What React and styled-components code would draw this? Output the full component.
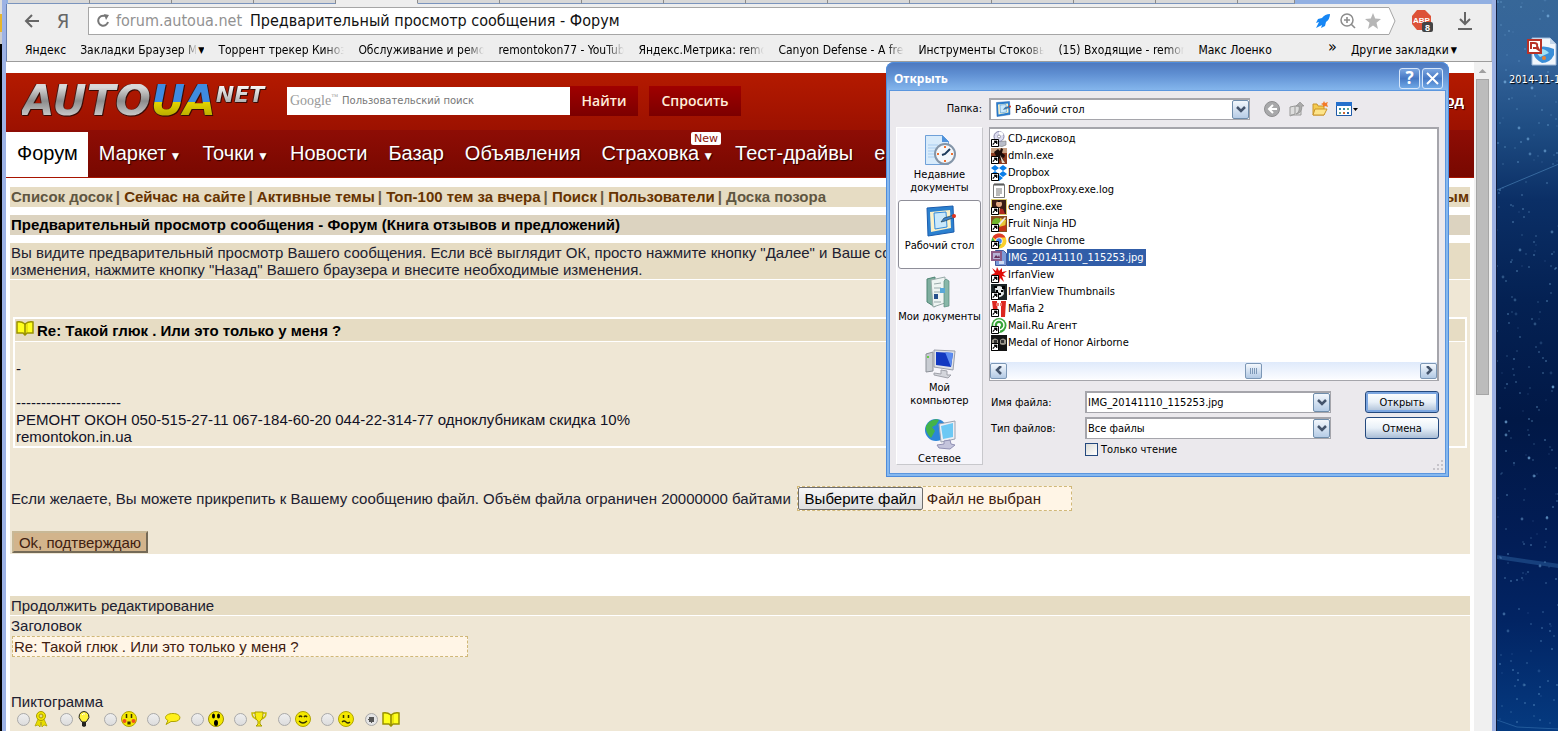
import { useRef, useState } from "react";
import styled, { createGlobalStyle, css } from "styled-components";

const tahoma = `"DejaVu Sans Condensed", "Noto Sans", sans-serif`;
const arial = `"Liberation Sans", Arial, sans-serif`;

const GlobalStyle = createGlobalStyle`
  * { box-sizing: border-box; }
  body { margin: 0; background: #062a66; font-family: ${arial}; }
  button, input, select { font: inherit; color: inherit; }
  ul { list-style: none; margin: 0; padding: 0; }
  a { color: inherit; text-decoration: none; }
  svg { display: block; flex: none; }
`;

/* ── Desktop and browser frame ── */
const Screen = styled.div`
  position: relative;
  display: flex;
  height: 100vh;
  overflow: hidden;
`;

const LeftStrip = styled.div`
  flex: none;
  width: 2px;
  background: linear-gradient(#ddd 0 14px, #e8b62c 14px 32px, #ccc 32px 44px, #000 44px);
`;

const BrowserWindow = styled.div`
  flex: 1;
  min-width: 0;
  display: flex;
  flex-direction: column;
  background: #eeeeee;
  border: solid #9db2e4;
  border-width: 0 4px;
  box-shadow: inset 1px 0 #6780b4, inset -1px 0 #c8c8c8;
`;

const Desktop = styled.aside`
  position: relative;
  flex: none;
  width: 62px;
  overflow: hidden;
  border-left: 1px solid #101c3c;
  background: linear-gradient(#376798 0, #34649a 60px, #1e4c82 130px, #0b2f66 200px, #042153 300px, #011846 420px, #021d56 540px, #022463 620px, #053a80 731px);
`;

const Specks = styled.svg`
  position: absolute;
  inset: 0;
`;

const DesktopIcon = styled.div`
  position: relative;
  padding: 36px 0 0 12px;
  font: 11px/14px ${tahoma};
  color: #fff;
  text-shadow: 1px 1px 1px #000;
  white-space: nowrap;

  svg { margin: 0 0 5px 18px; }
`;

/* ── Browser chrome ── */
const TabStrip = styled.div`
  display: flex;
  flex: none;
  height: 4px;
  padding: 0 197px 0 2px;
  background: #92b0e2;
`;

const Tab = styled.div`
  flex: 0 0 82px;
  background: ${(p) => (p.$active ? "#eeeeee" : "#d8d8d8")};
  border-right: 1px solid #8b8b8b;
  border-bottom: 1px solid ${(p) => (p.$active ? "#eeeeee" : "#7a94bd")};

  &:last-child { flex: 1; }
`;

const Toolbar = styled.div`
  display: flex;
  align-items: center;
  flex: none;
  height: 34px;
  padding: 0 19px 0 18px;
  font: 16px/28px ${tahoma};
`;

const IconButton = styled.button`
  display: flex;
  align-items: center;
  justify-content: center;
  padding: 0;
  border: 0;
  background: none;
  color: #666;
  font-size: 20px;
  width: ${(p) => p.$w || 16}px;
  height: 28px;
  margin-left: ${(p) => p.$gap || 0}px;
`;

const Omnibox = styled.div`
  display: flex;
  align-items: center;
  flex: 1;
  min-width: 0;
  height: 28px;
  margin-left: 17px;
  padding: 0 6px;
  border: 1px solid #a6a6a6;
  border-right: 0;
  background: #fff;
  white-space: nowrap;
`;

const Host = styled.span`
  margin-left: 5px;
  color: #929292;
`;

const PageTitle = styled.span`
  flex: 1;
  margin-left: 8px;
  color: #111;
`;

const Bookmarks = styled.nav`
  display: flex;
  align-items: center;
  flex: none;
  gap: 14px;
  height: 24px;
  padding: 0 35px 0 19px;
  border-bottom: 1px solid #9c9c9c;
  font: 12px/22px ${tahoma};
  color: #000;
  white-space: nowrap;
`;

const Bookmark = styled.a`
  flex: none;
  display: flex;
  align-items: center;
  max-width: 126px;
  overflow: hidden;
  ${(p) => p.$wide && css`
    width: 126px;
    mask-image: linear-gradient(to right, #000 108px, transparent 126px);
  `}
`;

const MoreBookmarks = styled.button`
  margin-left: auto;
  padding: 0 0 6px;
  border: 0;
  background: none;
  font-size: 16px;
`;

const FolderName = styled.span`
  width: 116px;
  overflow: hidden;
  mask-image: linear-gradient(to right, #000 104px, transparent 118px);
`;

const Caret = styled.span`
  font-size: 9px;
  margin-left: 2px;
`;

const Viewport = styled.div`
  flex: 1;
  min-height: 0;
  display: flex;
`;

const Page = styled.main`
  flex: 1;
  min-width: 0;
  overflow: hidden;
  padding-top: 11px;
  background: #fff;
  font-size: 15px;
  line-height: 17px;
  color: #202030;
`;

const Scrollbar = styled.div`
  flex: none;
  width: 18px;
  padding: 7px 3px 0 2px;
  background: #f0f0f0;
`;

const ScrollArrow = styled.div`
  margin: 0 auto 6px;
  width: 8px;
  height: 4px;
  background: #a0a0a0;
  clip-path: polygon(50% 0, 100% 100%, 0 100%);
`;

const ScrollThumb = styled.div`
  height: 316px;
  border: 1px solid #a6a6a6;
  background: #bcbcbc;
`;

/* ── Site header ── */
const SiteHeader = styled.header`
  display: flex;
  align-items: center;
  height: 57px;
  padding: 0 10px 2px 16px;
  background: linear-gradient(#b41a00, #9c1100);
  color: #fff;
`;

const Logo = styled.a`
  display: flex;
  align-items: flex-start;
  width: 265px;
  font: italic bold 42px/34px "DejaVu Sans", sans-serif;
  filter: drop-shadow(1px 1px 0 #3a0a04) drop-shadow(-1px 0 0 #4a1a14);

  span {
    color: transparent;
    background: linear-gradient(#d8d8d8 10%, #8c8c8c 50%, #c4c4c4 90%);
    background-clip: text;
  }
  span + span { background-image: linear-gradient(#3f8be0 54%, #e3d400 54%, #b4a600); }
  span + span + span {
    padding-right: 4px;
    font-size: 22px;
    line-height: 22px;
    background-image: linear-gradient(#fff, #a0a0a0);
  }
`;

const SearchForm = styled.form`
  display: flex;
  align-items: center;
  height: 30px;
`;

const SearchField = styled.label`
  display: flex;
  align-items: center;
  gap: 4px;
  width: 283px;
  height: 28px;
  padding: 0 3px;
  background: #fff;
  color: #999;
  font: 14px "Liberation Serif", serif;

  sup { font-size: 7px; }

  input {
    flex: 1;
    min-width: 0;
    padding: 0;
    border: 0;
    outline: 0;
    background: none;
    font: 10px "DejaVu Sans", sans-serif;
  }
  input::placeholder { color: #777; }
`;

const RedButton = styled.button`
  height: 30px;
  width: ${(p) => p.$w}px;
  margin-left: ${(p) => p.$gap || 0}px;
  padding: 0;
  border: 0;
  background: linear-gradient(#a00000, #7c0000);
  color: #ffeeda;
  font: 600 14px "Open Sans", "Noto Sans", sans-serif;
`;

const LoginLink = styled.a`
  margin-left: auto;
  font-weight: bold;
  text-decoration: underline;
  text-shadow: 1px 1px 1px #300;
`;

const MainNav = styled.nav`
  display: flex;
  height: 48px;
  padding-top: 2px;
  border-bottom: 1px solid #a81400;
  background: linear-gradient(#8e0d05, #780800);
  white-space: nowrap;
`;

const NavItem = styled.a`
  position: relative;
  padding: 0 10px 0 11px;
  font-size: 20px;
  line-height: 43px;
  color: ${(p) => (p.$active ? "#000" : "#fff")};
  background: ${(p) => (p.$active ? "#fff" : "none")};
  text-shadow: ${(p) => (p.$active ? "none" : "1px 1px 1px #200")};

  small { font-size: 12px; margin-left: 3px; }
`;

const NewBadge = styled.span`
  position: absolute;
  top: 0;
  right: 3px;
  width: 30px;
  border-radius: 2px;
  background: #fff;
  color: #8c1408;
  font: 11px/13px "DejaVu Sans", sans-serif;
  text-align: center;
  text-shadow: none;
`;

/* ── Forum page ── */
const Content = styled.div`
  padding: 9px 4px 0;
`;

const LinkBar = styled.nav`
  display: flex;
  gap: 3px;
  height: 20px;
  padding: 0 1px;
  margin-bottom: 8px;
  background: #e6dcc3;
  color: #6b5b42;
  font-weight: bold;
  line-height: 20px;
  white-space: nowrap;

  a { color: #663300; }
  a.muted { color: #5f5641; }
  a:last-child { margin-left: auto; }
`;

const TitleBar = styled.h1`
  height: 20px;
  margin: 0 0 8px;
  padding: 0 1px;
  background: #dcd3c0;
  color: #000;
  font-size: 15px;
  line-height: 20px;
`;

const Notice = styled.p`
  margin: 0;
  padding: 1px;
  background: #e6dcc3;
  border-bottom: 1px solid #fff;
`;

const Panel = styled.section`
  padding: ${(p) => p.$pad || "1px"};
  background: #efe7d5;
`;

const Post = styled.article`
  margin: 0 2px 38px;
  border: 2px solid #fff;
  color: #111125;
`;

const PostTitle = styled.h2`
  display: flex;
  align-items: center;
  gap: 3px;
  height: 23px;
  margin: 0;
  padding: 0 1px;
  border-bottom: 1px solid #fff;
  background: #e6dcc3;
  color: #000;
  font-size: 15px;

  svg { align-self: flex-start; margin-top: 1px; }
`;

const PostBody = styled.p`
  margin: 0;
  padding: 1px 1px 1px;
  white-space: pre-line;
`;

const AttachRow = styled.div`
  display: flex;
  align-items: center;
  gap: 6px;
  margin-bottom: 20px;
  white-space: nowrap;
`;

const FileBox = styled.div`
  display: flex;
  align-items: center;
  gap: 4px;
  width: 275px;
  height: 25px;
  border: 1px dashed #d0b878;
  background: #fff5e6;
  color: #402010;

  input { display: none; }

  button {
    height: 23px;
    width: 125px;
    padding: 0;
    border: 1px solid #6e6e6e;
    border-radius: 2px;
    background: linear-gradient(#f6f6f6, #dedede);
    color: #000;
  }
`;

const OkButton = styled.button`
  display: block;
  width: 136px;
  height: 22px;
  margin-left: 1px;
  padding: 0;
  border: 2px outset #c8b896;
  background: #d2b48c;
  color: #402010;
  line-height: 17px;
`;

const SectionBar = styled.h2`
  height: 20px;
  margin: 42px 0 0;
  padding: 1px;
  border-bottom: 1px solid #fff;
  background: #e6dcc3;
  font-size: 15px;
  font-weight: normal;
`;

const TitleInput = styled.input`
  display: block;
  width: 456px;
  height: 21px;
  margin: 2px 0 36px 1px;
  padding: 0 1px;
  border: 1px dashed #d0b878;
  background: #fff5e6;
  color: #402010;
`;

const Fieldset = styled.fieldset`
  margin: 0;
  padding: 0 0 24px;
  border: 0;

  legend { padding: 0; }
  > div {
    display: grid;
    grid-template-columns: repeat(9, 1fr);
    width: 397px;
    padding-left: 6px;
  }
`;

const IconChoice = styled.label`
  display: flex;
  align-items: center;
  gap: 4px;
  height: 18px;

  input {
    appearance: none;
    flex: none;
    width: 13px;
    height: 13px;
    margin: 0;
    border: 1px solid #a9a9a9;
    border-radius: 50%;
    background: linear-gradient(#efefef, #dcdcdc);
  }
  input:checked {
    background: radial-gradient(circle, #555 0 3px, #e4e4e4 3px);
  }
`;

/* ── File dialog ── */
const Dialog = styled.div`
  position: absolute;
  top: 62px;
  right: 109px;
  width: 563px;
  padding: 0 4px 4px;
  border-radius: 8px 8px 0 0;
  background: linear-gradient(#4d77bd 0, #5f8fd2 12px, #86b8ee 29px);
  box-shadow: inset 0 0 0 1px #4e8cdc;
  font: 11px/13px ${tahoma};
  color: #000;
`;

const DialogTitle = styled.div`
  display: flex;
  align-items: center;
  gap: 2px;
  height: 29px;
  padding: 3px 2px 0 4px;
  color: #fff;
  font: bold 12px "Noto Sans", sans-serif;

  span { flex: 1; }
`;

const CaptionButton = styled.button`
  display: flex;
  align-items: center;
  justify-content: center;
  width: 21px;
  height: 21px;
  padding: 0;
  border: 1px solid #d6e6fa;
  border-radius: 3px;
  background: linear-gradient(#7ba6e0, #4678c4 50%, #6fa8e6);
  font: bold 17px "Noto Sans", sans-serif;
  line-height: 18px;
`;

const DialogBody = styled.div`
  display: grid;
  grid-template-columns: 87px 1fr;
  column-gap: 6px;
  padding: 7px 6px 8px;
  background: #ebe9ed;
  box-shadow: 0 0 0 1px #5b96de;
`;

const FolderLabel = styled.label`
  padding-right: 1px;
  line-height: 22px;
  text-align: right;
`;

const FolderRow = styled.div`
  display: flex;
  align-items: center;
  gap: 8px;
  margin-bottom: 7px;
`;

const ComboBox = styled.div`
  position: relative;
  display: flex;
  width: ${(p) => p.$w}px;
  height: 22px;
  border: 2px solid #a5a5ab;
  border-width: 2px 1px 1px 2px;
  background: #fff;

  input, select {
    appearance: none;
    width: 100%;
    min-width: 0;
    padding: 0 20px 0 ${(p) => (p.$icon ? 24 : 1)}px;
    border: 0;
    outline: 0;
    background: none;
  }
  > svg { position: absolute; left: 4px; top: 1px; }
`;

const DropArrow = styled.span`
  position: absolute;
  top: 0;
  right: 0;
  display: flex;
  align-items: center;
  justify-content: center;
  width: 17px;
  height: 19px;
  border: 1px solid #6f8dab;
  border-radius: 2px;
  background: linear-gradient(#f2f7fc, #b6cce6);
  pointer-events: none;
`;

const ToolIcon = styled.button`
  display: flex;
  padding: 0;
  border: 0;
  background: none;
  &:first-of-type { margin-left: 6px; }
`;

const Places = styled.ul`
  height: 338px;
  overflow: hidden;
  border: 1px solid #fff;
  border-right-color: #c8c8cc;
  border-bottom-color: #c8c8cc;
  background: #f6f5fa;
`;

const Place = styled.li`
  height: 69px;
  margin: 1px 1px 2px;
  border: 1px solid ${(p) => (p.$active ? "#8e8e98" : "transparent")};
  border-radius: 3px;
  background: ${(p) => (p.$active ? "#fff" : "none")};

  button {
    display: flex;
    flex-direction: column;
    align-items: center;
    gap: 2px;
    width: 100%;
    padding: 4px 0 0;
    border: 0;
    background: none;
    white-space: pre;
  }
`;

const FilePane = styled.div`
  display: flex;
  flex-direction: column;
`;

const FileListBox = styled.div`
  height: 254px;
  display: flex;
  flex-direction: column;
  justify-content: space-between;
  margin-bottom: 10px;
  padding: 1px 0;
  border: 2px solid #a5a5ab;
  border-width: 2px 2px 1px 1px;
  background: #fff;
`;

const FileRow = styled.li`
  display: flex;
  align-items: center;
  height: 17px;
  padding-left: 1px;

  span {
    padding: 0 2px 0 1px;
    line-height: 17px;
    ${(p) => p.$selected && css`
      background: #315da8;
      color: #fff;
    `}
  }
`;

const HScroll = styled.div`
  display: flex;
  align-items: center;
  justify-content: space-between;
  height: 17px;
  background: linear-gradient(#dfeafb, #fbfcff);
`;

const HScrollPart = styled.div`
  display: flex;
  align-items: center;
  justify-content: center;
  width: 17px;
  height: 16px;
  border: 1px solid #7c97b6;
  border-radius: 2px;
  background: linear-gradient(#f4f8fd, #b2c9e4);

  /* uneven free space on each side of the thumb */
  &:nth-child(2) { margin-left: 80px; }
`;

const FormGrid = styled.div`
  display: grid;
  grid-template-columns: 94px 246px 1fr;
  row-gap: 4px;
  align-items: center;
  padding-left: 2px;
`;

const DialogButton = styled.button`
  justify-self: end;
  width: 74px;
  height: 22px;
  padding: 0;
  border: 1px solid #24497e;
  border-radius: 3px;
  background: linear-gradient(#fff, #e8f0f8 50%, #a9bdd6);
  box-shadow: ${(p) => (p.$primary ? "inset 0 0 0 2px #7ca6e0" : "none")};
`;

const CheckLabel = styled.label`
  grid-column: 2;
  display: flex;
  align-items: center;
  gap: 3px;

  input {
    appearance: none;
    width: 13px;
    height: 13px;
    margin: 0;
    border: 1px solid #24497e;
    background: linear-gradient(135deg, #dcdcd7, #fff);
  }
`;

const Grip = styled.svg`
  position: absolute;
  right: 5px;
  bottom: 5px;
`;

/* ── Icons ── */
const Shortcut = () => (
  <g>
    <path d="M0.500 8.500h7v7h-7z" fill="#fff" stroke="#000" />
    <path d="M2 14c0-2 1-2.500 2.500-2.500M3 10h3v3z" fill="#000" stroke="#000" strokeWidth=".7" />
  </g>
);

const fileArt = {
  cd: (
    <>
      <path d="M5 11l10-1v4l-4 1.500-6-1z" fill="#b8bcc8" stroke="#777" strokeWidth=".6" />
      <circle cx="8" cy="5.500" r="5" fill="#dcdcf0" stroke="#8888a8" />
      <path d="M8 .6a5 5 0 0 1 4.500 3L8 5.500z" fill="#fff" />
      <circle cx="8" cy="5.500" r="1.500" fill="#fff" stroke="#99a" />
    </>
  ),
  horse: (
    <>
      <path d="M0 0h16v16H0z" fill="#8b3b20" />
      <path d="M0 0h16v5H0z" fill="#c9a080" />
      <path d="M3 4l4-3 2 2 1-3 2 1-1 4 3 2-1 3-2-1 2 4h-3l-2-3-3 3-2-1 2-4z" fill="#1c0c08" />
      <path d="M9 7l5 8h-3z" fill="#eadcc8" />
    </>
  ),
  dropbox: (
    <path d="M4 0l4 3-4 3-4-3zm8 0l4 3-4 3-4-3zM4 6l4 3-4 3-4-3zm8 0l4 3-4 3-4-3zM8 10l4 3-4 3-4-3z" fill="#0a7de8" />
  ),
  log: (
    <>
      <path d="M2.500 2.500h11v13h-11z" fill="#fff" stroke="#777" />
      <path d="M4 1v3m2-3v3m2-3v3m2-3v3m2-3v3" stroke="#444" />
      <path d="M5 7h6M5 9h6M5 11h6M5 13h4" stroke="#777" />
    </>
  ),
  engine: (
    <>
      <path d="M.5.5h15v15H.5z" fill="#3a1c14" stroke="#d9c96a" />
      <circle cx="8" cy="5" r="3" fill="#e2ab84" />
      <path d="M5 4q3-5 6 0l-1-1H6z" fill="#111" />
      <path d="M4 15q1-7 8-5l2 5z" fill="#b02a20" />
      <path d="M7 9h2l-1 6z" fill="#ead9b0" />
    </>
  ),
  ninja: (
    <>
      <path d="M0 0h16v16H0z" fill="#8a4f20" />
      <circle cx="6" cy="7" r="5" fill="#6fb52c" />
      <path d="M9 2l6 2-1 8-5 2z" fill="#e9c636" />
      <path d="M2 13L14 1l1 1L4 15z" fill="#eee" />
      <path d="M8 11l7-2v6H8z" fill="#c33418" />
    </>
  ),
  chrome: (
    <>
      <circle cx="8" cy="8" r="7.500" fill="#fbcf2b" />
      <path d="M8 8L1.500 4.200A7.500 7.500 0 0 1 14.500 4.500H8z" fill="#df3b2c" />
      <path d="M8 8L4.800 10 1.500 4.200A7.500 7.500 0 0 0 7.500 15.500l3-5z" fill="#3fa64b" />
      <circle cx="8" cy="8" r="3.600" fill="#fff" />
      <circle cx="8" cy="8" r="2.800" fill="#4385ee" />
    </>
  ),
  image: (
    <>
      <path d="M4.500.5h8l3 3v12h-11z" fill="#7b9ad8" stroke="#42599c" />
      <path d="M0 1h11v10H0z" fill="#8c5a86" />
      <path d="M2 3h7v6H2z" fill="#b7b3d6" />
      <path d="M3 8l2-3 2 2 1-2 1 3z" fill="#66305c" />
      <path d="M8 11h5v3H8z" fill="#d0dcf2" />
    </>
  ),
  splat: (
    <path d="M1 1l4 3 1-4 2 4 3-3v4l5-1-4 3 3 3-4-1 2 6-4-4-1 5-2-5-4 2 2-4-4-1 4-2z" fill="#e00c08" />
  ),
  panda: (
    <>
      <path d="M0 0h16v16H0z" fill="#1c2426" />
      <path d="M4 4q4-4 8 0l1 6q-4 6-8 1z" fill="#e6eaea" />
      <path d="M5 6h2v2H5zm5 0h2v2h-2zM7 9h3v2H7zM3 2h3v2H3zm8 0h3v3h-3z" fill="#000" />
    </>
  ),
  mafia: (
    <>
      <path d="M1 0h5l1 16H3z" fill="#dc2620" />
      <path d="M10 0h5l-1 16h-4z" fill="#dc2620" />
      <path d="M5 2h3v3H5zm4 0h2v3H9z" fill="#ef7a70" />
    </>
  ),
  agent: (
    <>
      <circle cx="8" cy="7.500" r="7.500" fill="#38a538" />
      <circle cx="8" cy="7" r="5" fill="none" stroke="#fff" strokeWidth="1.500" />
      <circle cx="8" cy="7" r="2" fill="#fff" />
      <path d="M7 8h2v6H7z" fill="#fff" />
    </>
  ),
  medal: (
    <>
      <path d="M0 0h16v16H0z" fill="#141414" />
      <path d="M1 5q3-3 6 0v4q-3 2-6 0zm8 0q3-3 6 0v4q-3 2-6 0z" fill="#98948a" />
      <path d="M3 5h3v3H3zm7 0h3v3h-3z" fill="#333" />
    </>
  ),
};

const FileIcon = ({ name, shortcut }) => (
  <svg width="16" height="16" viewBox="0 0 16 16">
    {fileArt[name]}
    {shortcut && <Shortcut />}
  </svg>
);

const placeArt = {
  recent: (
    <>
      <path d="M1.500 1.500h17l6 6v23h-23z" fill="#d8ebfb" stroke="#6fa0d8" />
      <path d="M18 1l7 7h-7z" fill="#4f92dc" />
      <path d="M4 11h10M4 14h8M4 17h7M4 20h7M4 23h8" stroke="#a9cdf0" />
      <circle cx="21" cy="20" r="10" fill="#f2f7fc" stroke="#8495a8" strokeWidth="2" />
      <path d="M21 12v2m0 12v2m-8-8h2m12 0h2" stroke="#ee7030" strokeWidth="2" />
      <path d="M26 15l-5 5-3 1" fill="none" stroke="#1d3c5c" strokeWidth="2" />
    </>
  ),
  desktop: (
    <>
      <path d="M3 3l26-2 1 26-26 4z" fill="#2b80cf" stroke="#1a5cae" />
      <path d="M6 7l20-2 1 18-20 4z" fill="#fbf1c8" />
      <path d="M10 8l12-1 1 15-12 2z" fill="#c9e8fb" stroke="#338bdc" />
      <path d="M17 17l3-4 10-3 1 2-10 4z" fill="#3b80c8" stroke="#245" strokeWidth=".7" />
      <circle cx="30" cy="11" r="2" fill="#e03420" />
    </>
  ),
  docs: (
    <>
      <path d="M3 3l8-2v30l-8-5z" fill="#7fae9f" stroke="#4f8574" />
      <path d="M7 4l14-3v26L9 31z" fill="#eef4f2" stroke="#98aaa8" />
      <path d="M22 3l3 2v25l-5 1V5z" fill="#88b7a8" stroke="#588a7c" strokeWidth=".7" />
      <path d="M10 8l7-1m-7 5h7m-7 4h7m-7 10h7" stroke="#9aa" />
      <path d="M10 18h4v5h-4z" fill="#26508c" />
      <path d="M16 12h5v5h-5z" fill="#58a8d8" />
    </>
  ),
  computer: (
    <>
      <path d="M2 7l7-2v19l-7 1z" fill="#c8ccd2" stroke="#8c9098" />
      <path d="M3 9h2v2H3z" fill="#6c4" />
      <path d="M10 3l21 1-2 19-19-3z" fill="#dfe2e8" stroke="#9a9ea8" />
      <path d="M12 5l17 1-2 14-15-2z" fill="#1238c0" />
      <path d="M21 5l8 1-2 14z" fill="#5c8cf0" />
      <path d="M17 23l6 1v4h4l-3 3-14-3v-2l7 1z" fill="#d4d6dc" stroke="#a0a2aa" />
    </>
  ),
  network: (
    <>
      <circle cx="12" cy="12" r="11" fill="#2c86d8" />
      <path d="M5 4q6-4 10-2l-3 5-4 2 3 4-4 7q-6-6-5-12z" fill="#43b34a" />
      <path d="M15 6l16-3v18l-14 3z" fill="#eceef4" stroke="#9aa2b0" />
      <path d="M17 8l12-3v14l-10 2z" fill="#6cc8f4" />
      <path d="M20 23l6-1 1 4 4 1-5 4-11-1-2-3 7-1z" fill="#c4c4dc" stroke="#9090b4" />
    </>
  ),
};

const OpenBook = () => (
  <svg width="18" height="16" viewBox="0 0 18 16">
    <path d="M1 2q4-1 8 2 4-3 8-2v11H11l-2 2-2-2H1z" fill="#ffff1e" stroke="#9a9200" strokeWidth="1.500" />
    <path d="M9 4v10" stroke="#8c8400" strokeWidth="1.500" />
    <path d="M11 4v8" stroke="#d8cc00" />
  </svg>
);

const Smile = ({ mouth, eyes, cheeks }) => (
  <svg width="16" height="16" viewBox="0 0 16 16">
    <circle cx="8" cy="8" r="7.500" fill="#f4e800" stroke="#b0a400" />
    {cheeks && (
      <g fill="#f0501c">
        <circle cx="3.500" cy="10" r="2" />
        <circle cx="12.500" cy="10" r="2" />
      </g>
    )}
    <path d={eyes} fill="none" stroke="#333000" strokeWidth="1.500" />
    <path d={mouth} fill={cheeks ? "#5a3000" : "none"} stroke="#333000" strokeWidth="1.200" />
  </svg>
);

const postIcons = [
  ["Награда", (
    <svg width="14" height="16" viewBox="0 0 14 16">
      <path d="M4 8l-3 7 3-1 2 2 1-5 1 5 2-2 3 1-3-7z" fill="#e8dc00" stroke="#a89c00" strokeWidth=".7" />
      <circle cx="7" cy="5" r="4.500" fill="#f4e800" stroke="#a89c00" />
      <circle cx="7" cy="5" r="2" fill="#e8dc90" stroke="#a89c00" />
    </svg>
  )],
  ["Идея", (
    <svg width="14" height="16" viewBox="0 0 14 16">
      <path d="M7 .5a5 5 0 0 1 3.500 8.500l-1.500 2H5L3.500 9A5 5 0 0 1 7 .5z" fill="#fff23c" stroke="#222" />
      <path d="M5 11h4v4l-2 1-2-1z" fill="#222" />
      <path d="M5 4q1-2 3-1" stroke="#fff" fill="none" />
    </svg>
  )],
  ["Смущение", <Smile cheeks eyes="M5.500 3v4m5-4v4" mouth="M7 11h2v2H7z" />],
  ["Реплика", (
    <svg width="17" height="16" viewBox="0 0 17 16">
      <path d="M9 2.500c9 0 9 8 1 8H7l-5 3 2-4C-1 7 2 2.500 9 2.500z" fill="#fff01c" stroke="#b0a400" />
    </svg>
  )],
  ["Удивление", (
    <svg width="16" height="16" viewBox="0 0 16 16">
      <circle cx="8" cy="8" r="7.500" fill="#f4e800" stroke="#9c9000" />
      <ellipse cx="5.500" cy="5" rx="1.500" ry="2.500" />
      <ellipse cx="10.500" cy="5" rx="1.500" ry="2.500" />
      <ellipse cx="8" cy="12" rx="2" ry="3" />
    </svg>
  )],
  ["Кубок", (
    <svg width="16" height="16" viewBox="0 0 16 16">
      <path d="M4 2H1q0 5 5 6M12 2h3q0 5-5 6" fill="none" stroke="#c8bc00" strokeWidth="1.500" />
      <path d="M4 1h8q0 8-3 9v3l2 2H5l2-2v-3Q4 9 4 1z" fill="#f8ec10" stroke="#a89c00" />
    </svg>
  )],
  ["Подмигивание", <Smile eyes="M4 6q1.500-2 3 0m2 0q1.500-2 3 0" mouth="M4 10q4 4 8 0" />],
  ["Грусть", <Smile eyes="M5.500 4v3m5-3v3" mouth="M4 11q2-2 4 0t4 0" />],
  ["Книга", <OpenBook />],
];

const Chevron = ({ d = "M1 2l4 4 4-4" }) => (
  <svg width="10" height="9" viewBox="0 0 10 9">
    <path d={d} fill="none" stroke="#44546c" strokeWidth="2.500" />
  </svg>
);

const DesktopFolderIcon = () => (
  <svg width="16" height="16" viewBox="0 0 32 32">{placeArt.desktop}</svg>
);

const bookmarks = [
  ["Торрент трекер Кинозал", true],
  ["Обслуживание и ремонт", true],
  ["remontokon77 - YouTube", true],
  ["Яндекс.Метрика: remont", true],
  ["Canyon Defense - A free", true],
  ["Инструменты Стоковый", true],
  ["(15) Входящие - remont", true],
  ["Макс Лоенко", false],
];

const navItems = [
  { text: "Форум", active: true },
  { text: "Маркет", menu: true },
  { text: "Точки", menu: true },
  { text: "Новости" },
  { text: "Базар" },
  { text: "Объявления" },
  { text: "Страховка", menu: true, badge: "New" },
  { text: "Тест-драйвы" },
  { text: "еще" },
];

const forumLinks = [
  ["Список досок", true],
  ["Сейчас на сайте"],
  ["Активные темы"],
  ["Топ-100 тем за вчера"],
  ["Поиск"],
  ["Пользователи"],
  ["Доска позора", true],
];

const files = [
  ["CD-дисковод", "cd", true],
  ["dmln.exe", "horse", true],
  ["Dropbox", "dropbox", true],
  ["DropboxProxy.exe.log", "log", false],
  ["engine.exe", "engine", true],
  ["Fruit Ninja HD", "ninja", true],
  ["Google Chrome", "chrome", true],
  ["IMG_20141110_115253.jpg", "image", false],
  ["IrfanView", "splat", true],
  ["IrfanView Thumbnails", "panda", true],
  ["Mafia 2", "mafia", true],
  ["Mail.Ru Агент", "agent", true],
  ["Medal of Honor Airborne", "medal", true],
];

const places = [
  ["Недавние\nдокументы", "recent"],
  ["Рабочий стол", "desktop"],
  ["Мои документы", "docs"],
  ["Мой\nкомпьютер", "computer"],
  ["Сетевое", "network"],
];

// fixed pseudo-random scatter for the wallpaper
const specks = Array.from({ length: 260 }, (_, i) => ({
  x: (i * 37 + ((i * i) % 23)) % 62,
  y: (i * 89 + ((i * i * 7) % 61)) % 731,
  r: i % 9 === 0 ? 1.4 : 0.8,
  o: 0.2 + (i % 5) * 0.12,
}));

function BrowserChrome() {
  return (
    <>
      <TabStrip>
        {Array.from({ length: 16 }, (_, i) => <Tab key={i} $active={i === 4} />)}
      </TabStrip>
      <Toolbar>
        <IconButton aria-label="Назад">
          <svg width="16" height="14" viewBox="0 0 16 14">
            <path d="M15 7H2m6-6L2 7l6 6" fill="none" stroke="currentColor" strokeWidth="2" />
          </svg>
        </IconButton>
        <IconButton aria-label="Яндекс" $gap={15}>Я</IconButton>
        <Omnibox>
          <IconButton aria-label="Обновить">
            <svg width="14" height="14" viewBox="0 0 14 14">
              <path d="M12 8a5 5 0 1 1-3-6" fill="none" stroke="#777" strokeWidth="2" />
              <path d="M8 0l5 1-3 5z" fill="#777" />
            </svg>
          </IconButton>
          <Host>forum.autoua.net</Host>
          <PageTitle>Предварительный просмотр сообщения - Форум</PageTitle>
          <IconButton aria-label="Турбо">
            <svg width="16" height="16" viewBox="0 0 16 16">
              <path d="M15 1q-5 0-8 4L3 6l-2 4 3-1-3 6 6-3-1 3 4-2 1-4q4-3 4-8z" fill="#1686f4" />
            </svg>
          </IconButton>
          <IconButton aria-label="Масштаб" $gap={9}>
            <svg width="16" height="16" viewBox="0 0 16 16">
              <circle cx="7" cy="7" r="6" fill="none" stroke="#8c8c8c" strokeWidth="1.500" />
              <path d="M4 7h6M7 4v6m4 1l4 4" stroke="#8c8c8c" strokeWidth="1.600" />
            </svg>
          </IconButton>
          <IconButton aria-label="В закладки" $gap={9}>
            <svg width="16" height="16" viewBox="0 0 16 16">
              <path d="M8 0l2.200 5.600 5.800.4-4.500 3.700L13 16l-5-3.500L3 16l1.500-6.300L0 6l5.800-.4z" fill="#b6b6b6" />
            </svg>
          </IconButton>
        </Omnibox>
        <svg width="9" height="28" viewBox="0 0 9 28">
          <path d="M0 .5h2l6 13.500-6 13.500H0" fill="#fff" stroke="#a6a6a6" />
        </svg>
        <IconButton aria-label="AdBlock" $w={24} $gap={15}>
          <svg width="24" height="24" viewBox="0 0 24 24">
            <path d="M6 1h8l6 6v8l-6 6H6l-5-6V7z" fill="#dd5238" />
            <text x="2" y="14" fontSize="8" fontWeight="bold" fontFamily="Liberation Sans" fill="#fff">ABP</text>
            <rect x="11" y="13" width="11" height="10" rx="2" fill="#444" />
            <text x="14" y="22" fontSize="9" fontWeight="bold" fontFamily="Liberation Sans" fill="#fff">8</text>
          </svg>
        </IconButton>
        <IconButton aria-label="Загрузки" $gap={22}>
          <svg width="14" height="18" viewBox="0 0 14 18">
            <path d="M7 0v12M2 7l5 5 5-5M0 17h14" fill="none" stroke="currentColor" strokeWidth="2" />
          </svg>
        </IconButton>
      </Toolbar>
      <Bookmarks>
        <Bookmark href="#">Яндекс</Bookmark>
        <Bookmark href="#"><FolderName>Закладки Браузер M</FolderName><Caret>▼</Caret></Bookmark>
        {bookmarks.map(([text, wide]) => (
          <Bookmark href="#" key={text} $wide={wide}>{text}</Bookmark>
        ))}
        <MoreBookmarks aria-label="Ещё закладки">»</MoreBookmarks>
        <Bookmark href="#">Другие закладки<Caret>▼</Caret></Bookmark>
      </Bookmarks>
    </>
  );
}

function ForumPage() {
  const fileInput = useRef(null);
  return (
    <Page>
      <SiteHeader>
        <Logo href="#"><span>AUTO</span><span>UA</span><span>NET</span></Logo>
        <SearchForm onSubmit={(e) => e.preventDefault()}>
          <SearchField>
            <span>Google<sup>™</sup></span>
            <input placeholder="Пользовательский поиск" />
          </SearchField>
          <RedButton $w={68}>Найти</RedButton>
          <RedButton type="button" $w={92} $gap={11}>Спросить</RedButton>
        </SearchForm>
        <LoginLink href="#">Вход</LoginLink>
      </SiteHeader>
      <MainNav>
        {navItems.map((n) => (
          <NavItem href="#" key={n.text} $active={n.active}>
            {n.text}
            {n.menu && <small>▼</small>}
            {n.badge && <NewBadge>{n.badge}</NewBadge>}
          </NavItem>
        ))}
      </MainNav>
      <Content>
        <LinkBar>
          {forumLinks.map(([text, muted], i) => (
            <span key={text}>
              {i > 0 && "| "}
              <a href="#" className={muted ? "muted" : ""}>{text}</a>
            </span>
          ))}
          <a href="#">Сделать стартовым</a>
        </LinkBar>
        <TitleBar>Предварительный просмотр сообщения - Форум (Книга отзывов и предложений)</TitleBar>
        <Notice>
          Вы видите предварительный просмотр Вашего сообщения. Если всё выглядит ОК, просто нажмите
          кнопку "Далее" и Ваше сообщение будет отправлено. Если же Вы хотите внести в него какие-либо
          изменения, нажмите кнопку "Назад" Вашего браузера и внесите необходимые изменения.
        </Notice>
        <Panel $pad="37px 1px 1px">
          <Post>
            <PostTitle><OpenBook />Re: Такой глюк . Или это только у меня ?</PostTitle>
            <PostBody>
              {"\n-\n\n---------------------\nРЕМОНТ ОКОН 050-515-27-11 067-184-60-20 044-22-314-77 одноклубникам скидка 10%\nremontokon.in.ua"}
            </PostBody>
          </Post>
          <AttachRow>
            <span>Если желаете, Вы можете прикрепить к Вашему сообщению файл. Объём файла ограничен 20000000 байтами</span>
            <FileBox>
              <input type="file" ref={fileInput} aria-label="Файл" />
              <button type="button" onClick={() => fileInput.current.click()}>Выберите файл</button>
              <span>Файл не выбран</span>
            </FileBox>
          </AttachRow>
          <OkButton>Ok, подтверждаю</OkButton>
        </Panel>
        <SectionBar>Продолжить редактирование</SectionBar>
        <Panel>
          <label htmlFor="subject">Заголовок</label>
          <TitleInput id="subject" defaultValue="Re: Такой глюк . Или это только у меня ?" />
          <Fieldset>
            <legend>Пиктограмма</legend>
            <div>
              {postIcons.map(([name, icon]) => (
                <IconChoice key={name}>
                  <input type="radio" name="icon" aria-label={name} defaultChecked={name === "Книга"} />
                  {icon}
                </IconChoice>
              ))}
            </div>
          </Fieldset>
        </Panel>
      </Content>
    </Page>
  );
}

function OpenDialog() {
  const [selected, setSelected] = useState("IMG_20141110_115253.jpg");
  return (
    <Dialog role="dialog" aria-label="Открыть">
      <DialogTitle>
        <span>Открыть</span>
        <CaptionButton aria-label="Справка">?</CaptionButton>
        <CaptionButton aria-label="Закрыть">
          <svg width="13" height="13" viewBox="0 0 13 13">
            <path d="M1 1l11 11M12 1L1 12" stroke="#fff" strokeWidth="2" />
          </svg>
        </CaptionButton>
      </DialogTitle>
      <DialogBody>
        <FolderLabel htmlFor="folder">Папка:</FolderLabel>
        <FolderRow>
          <ComboBox $w={261} $icon>
            <DesktopFolderIcon />
            <select id="folder"><option>Рабочий стол</option></select>
            <DropArrow><Chevron /></DropArrow>
          </ComboBox>
          <ToolIcon aria-label="Назад">
            <svg width="16" height="16" viewBox="0 0 16 16">
              <circle cx="8" cy="8" r="7.500" fill="#a8a8aa" stroke="#8e8e90" />
              <path d="M13 8H5m4-4L5 8l4 4" fill="none" stroke="#fff" strokeWidth="2" />
            </svg>
          </ToolIcon>
          <ToolIcon aria-label="Вверх">
            <svg width="16" height="16" viewBox="0 0 16 16">
              <path d="M2 6l5-1v8l-5 2zM7 5h6v9H3" fill="#ddd" stroke="#999" />
              <path d="M8 13q4-2 3-8H8l4-4 4 4h-2q0 7-6 8z" fill="#aaa" stroke="#888" strokeWidth=".6" />
            </svg>
          </ToolIcon>
          <ToolIcon aria-label="Новая папка">
            <svg width="16" height="16" viewBox="0 0 16 16">
              <path d="M1 3h4l1 2h6v9H1z" fill="#f4cb50" stroke="#c9942a" />
              <path d="M3 8h12l-3 6H1z" fill="#fde48a" stroke="#c9942a" />
              <path d="M12 0l1 2 3-1-1 2 1 3-3-1-2 1v-2L9 3l2-1z" fill="#f37a28" />
            </svg>
          </ToolIcon>
          <ToolIcon aria-label="Вид">
            <svg width="23" height="16" viewBox="0 0 23 16">
              <path d="M.5 1.500h15v13H.5z" fill="#fff" stroke="#1e5aa8" />
              <path d="M0 1h16v4H0z" fill="#2470cc" />
              <path d="M3 7h2v2H3zm4 0h2v2H7z" fill="#38a" />
              <path d="M11 7h2v2h-2zM3 11h2v2H3z" fill="#6a8" />
              <path d="M7 11h2v2H7z" fill="#c63" />
              <path d="M11 11h2v2h-2z" fill="#26a" />
              <path d="M17 7h5l-2.500 3z" />
            </svg>
          </ToolIcon>
        </FolderRow>
        <Places>
          {places.map(([text, icon]) => (
            <Place key={icon} $active={icon === "desktop"}>
              <button>
                <svg width="32" height="32" viewBox="0 0 32 32">{placeArt[icon]}</svg>
                {text}
              </button>
            </Place>
          ))}
        </Places>
        <FilePane>
          <FileListBox>
            <ul role="listbox" aria-label="Файлы">
              {files.map(([name, icon, shortcut]) => (
                <FileRow
                  key={name}
                  role="option"
                  aria-selected={name === selected}
                  $selected={name === selected}
                  onClick={() => setSelected(name)}
                >
                  <FileIcon name={icon} shortcut={shortcut} />
                  <span>{name}</span>
                </FileRow>
              ))}
            </ul>
            <HScroll>
              <HScrollPart><Chevron d="M7 0L3 4l4 4" /></HScrollPart>
              <HScrollPart>
                <svg width="8" height="6" viewBox="0 0 8 6">
                  <path d="M.5 0v6m2-6v6m2-6v6m2-6v6" stroke="#7c97b6" />
                </svg>
              </HScrollPart>
              <HScrollPart><Chevron d="M3 0l4 4-4 4" /></HScrollPart>
            </HScroll>
          </FileListBox>
          <FormGrid>
            <label htmlFor="filename">Имя файла:</label>
            <ComboBox $w={246}>
              <input id="filename" value={selected} onChange={(e) => setSelected(e.target.value)} />
              <DropArrow><Chevron /></DropArrow>
            </ComboBox>
            <DialogButton $primary>Открыть</DialogButton>
            <label htmlFor="filetype">Тип файлов:</label>
            <ComboBox $w={246}>
              <select id="filetype"><option>Все файлы</option></select>
              <DropArrow><Chevron /></DropArrow>
            </ComboBox>
            <DialogButton>Отмена</DialogButton>
            <CheckLabel><input type="checkbox" />Только чтение</CheckLabel>
          </FormGrid>
        </FilePane>
      </DialogBody>
      <Grip width="12" height="12" viewBox="0 0 12 12">
        <path d="M9 0h2v2H9zM5 4h2v2H5zm4 0h2v2H9zM1 8h2v2H1zm4 0h2v2H5zm4 0h2v2H9z" fill="#c6c4ca" />
      </Grip>
    </Dialog>
  );
}

export default function App() {
  return (
    <Screen>
      <GlobalStyle />
      <LeftStrip />
      <BrowserWindow>
        <BrowserChrome />
        <Viewport>
          <ForumPage />
          <Scrollbar>
            <ScrollArrow />
            <ScrollThumb />
          </Scrollbar>
        </Viewport>
      </BrowserWindow>
      <Desktop>
        <Specks width="62" height="731" viewBox="0 0 62 731">
          <path d="M0 190L62 164" stroke="#4f88bc" opacity=".6" />
          <path d="M0 557l62 9" stroke="#2c62a0" strokeWidth="4" opacity=".5" />
          <path d="M0 720l20 7 42 2" stroke="#3f7cb8" opacity=".5" fill="none" />
          {specks.map((s, i) => (
            <circle key={i} cx={s.x} cy={s.y} r={s.r} fill="#7fb6e4" opacity={s.o} />
          ))}
        </Specks>
        <DesktopIcon>
          <svg width="32" height="32" viewBox="0 0 32 32">
            <path d="M5 2h18l6 6v21H5z" fill="#f1f6fc" stroke="#9db8d8" />
            <path d="M23 2v6h6z" fill="#c4d6ea" />
            <path d="M7 13q9-5 20 0v6q-4 8-12 8-7-4-8-8z" fill="#3a8ed8" />
            <path d="M8 15q8-5 14 2l-9 4z" fill="#9fe0f4" />
            <circle cx="17" cy="22" r="2" fill="#e88030" />
            <path d="M1 4h13v13H1z" fill="#fff" stroke="#b83228" strokeWidth="2" />
            <path d="M4 13V7h3q4 0 3 3l2 4-3-2H6" fill="none" stroke="#b83228" strokeWidth="2" />
          </svg>
          2014-11-10
        </DesktopIcon>
      </Desktop>
      <OpenDialog />
    </Screen>
  );
}
